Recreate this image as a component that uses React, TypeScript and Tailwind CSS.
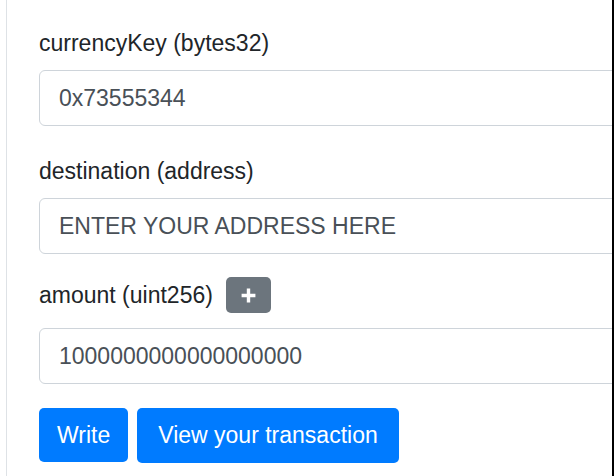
import React from "react";

const font = { fontFamily: '"Liberation Sans", Arial, sans-serif' };

function Field({ value }: { value: string }) {
  return (
    <div className="flex h-[56px] w-[620px] shrink-0 items-center rounded-[6px] border border-[#ced4da] bg-white pl-[19px] text-[23px] text-[#495057]">
      {value}
    </div>
  );
}

export default function App() {
  return (
    <div
      className="flex h-[476px] w-[614px] overflow-hidden bg-white"
      style={font}
    >
      <div className="w-[6px] shrink-0 bg-white" />
      <div className="flex min-w-0 flex-1 flex-col overflow-hidden border-l border-[#dee2e6] pl-[32px] pt-[26px]">
        <div className="h-[34px] text-[23px] leading-[34px] text-[#212529]">
          currencyKey (bytes32)
        </div>
        <div className="mt-[10px]">
          <Field value="0x73555344" />
        </div>
        <div className="mt-[28px] h-[34px] text-[23px] leading-[34px] text-[#212529]">
          destination (address)
        </div>
        <div className="mt-[10px]">
          <Field value="ENTER YOUR ADDRESS HERE" />
        </div>
        <div className="mt-[22px] flex h-[38px] items-center gap-[13px]">
          <span className="text-[23px] leading-[34px] text-[#212529]">
            amount (uint256)
          </span>
          <span className="flex h-[36px] w-[45px] items-center justify-center rounded-[5px] bg-[#6c757d]">
            <svg width="17" height="17" viewBox="0 0 16 16">
              <path
                d="M8 1.5v13M1.5 8h13"
                stroke="#ffffff"
                strokeWidth="3.2"
                strokeLinecap="butt"
              />
            </svg>
          </span>
        </div>
        <div className="mt-[14px]">
          <Field value="1000000000000000000" />
        </div>
        <div className="mt-[24px] flex gap-[9px]">
          <button className="flex h-[54px] items-center rounded-[5px] bg-[#007bff] px-[18px] text-[23px] text-white">
            Write
          </button>
          <button className="flex h-[55px] items-center rounded-[5px] bg-[#007bff] px-[21px] text-[23px] text-white">
            View your transaction
          </button>
        </div>
      </div>
      <div className="w-[2px] shrink-0 bg-black" />
    </div>
  );
}
